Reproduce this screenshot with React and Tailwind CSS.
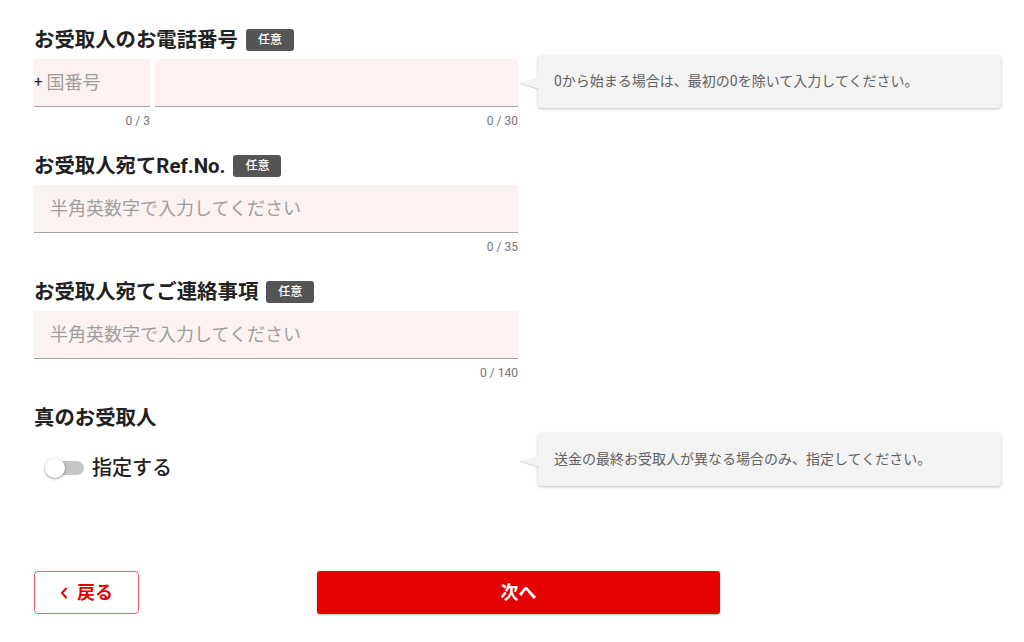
import React from 'react';

function Badge() {
  return (
    <span className="flex h-[22px] w-12 shrink-0 items-center justify-center rounded-[3px] bg-[#555555] text-[12px] font-medium text-white">
      任意
    </span>
  );
}

function Tip({ text }) {
  return (
    <div className="relative mt-[26px] flex h-[53px] items-center rounded bg-[#f3f3f3] pl-4 text-[14px] text-[#616161] shadow-[0_1px_3px_rgba(0,0,0,0.25)]">
      <svg className="absolute -left-[18px] top-[22px]" width="19" height="14" viewBox="0 0 19 14">
        <polygon points="0,6 19,0 19,12" fill="#f3f3f3" />
        <line x1="0" y1="6.5" x2="19" y2="12.5" stroke="#d2d2d2" strokeWidth="1" />
      </svg>
      {text}
    </div>
  );
}

function Section({ title, badge, tip, children, className = '' }) {
  return (
    <div className={'flex ' + className}>
      <div className="w-[484px] shrink-0">
        <div className="flex h-[22px] items-center gap-2">
          <h2 className="text-[20.4px] font-bold leading-none text-[#212121]">{title}</h2>
          {badge && <Badge />}
        </div>
        {children}
      </div>
      <div className="ml-5 w-[463px] shrink-0">{tip && <Tip text={tip} />}</div>
    </div>
  );
}

function Field({ count }) {
  return (
    <>
      <div className="mt-2 flex h-12 items-center border-b border-[#a3a3a3] bg-[#fdf2f1] px-4 text-[18px] text-[#9e9e9e]">
        半角英数字で入力してください
      </div>
      <div className="mt-1 h-5 text-right text-[12px] leading-5 text-[#757575]">{count}</div>
    </>
  );
}

export default function App() {
  return (
    <div className="min-h-[642px] bg-white pl-[34px] pr-[23px] pt-[29px] font-['Roboto','Noto_Sans_CJK_JP',sans-serif]">
      {/* phone */}
      <Section title="お受取人のお電話番号" badge tip="0から始まる場合は、最初の0を除いて入力してください。">
        <div className="mt-2 flex">
          <div className="flex h-12 w-[116px] items-center border-b border-[#a3a3a3] bg-[#fdf2f1]">
            <span className="text-[15px] text-[#212121]">+</span>
            <span className="ml-1 text-[18px] text-[#9e9e9e]">国番号</span>
          </div>
          <div className="ml-[5px] h-12 flex-1 border-b border-[#a3a3a3] bg-[#fdf2f1]" />
        </div>
        <div className="mt-1 flex h-5 text-[12px] leading-5 text-[#757575]">
          <div className="w-[116px] text-right">0 / 3</div>
          <div className="flex-1 text-right">0 / 30</div>
        </div>
      </Section>

      <Section title="お受取人宛てRef.No." badge className="mt-6">
        <Field count="0 / 35" />
      </Section>

      <Section title="お受取人宛てご連絡事項" badge className="mt-6">
        <Field count="0 / 140" />
      </Section>

      <Section title="真のお受取人" tip="送金の最終お受取人が異なる場合のみ、指定してください。" className="mt-6">
        <div className="mt-[19px] flex h-10 items-center">
          <div className="relative ml-[11px] h-5 w-10">
            <div className="absolute left-[3px] top-[3px] h-[14px] w-9 rounded-full bg-[#c6c6c6]" />
            <div className="absolute left-0 top-0 h-5 w-5 rounded-full bg-white shadow-[0_1px_3px_rgba(0,0,0,0.4)]" />
          </div>
          <span className="ml-[7px] text-[20px] font-medium text-[#212121]">指定する</span>
        </div>
      </Section>

      {/* buttons */}
      <div className="mt-[83px] flex">
        <button className="flex h-[43px] w-[105px] items-center justify-center gap-[9px] rounded border border-[#f06464] bg-white text-[18px] font-bold text-[#e60000]">
          <svg width="8" height="12" viewBox="0 0 8 12">
            <path d="M6 1.5 L2 6 L6 10.5" fill="none" stroke="#e60000" strokeWidth="2" strokeLinecap="round" strokeLinejoin="round" />
          </svg>
          戻る
        </button>
        <button className="ml-[178px] flex h-[43px] w-[403px] items-center justify-center rounded-[3px] bg-[#e60000] text-[18px] font-bold text-white shadow-[0_1px_2px_rgba(0,0,0,0.3)]">
          次へ
        </button>
      </div>
    </div>
  );
}
